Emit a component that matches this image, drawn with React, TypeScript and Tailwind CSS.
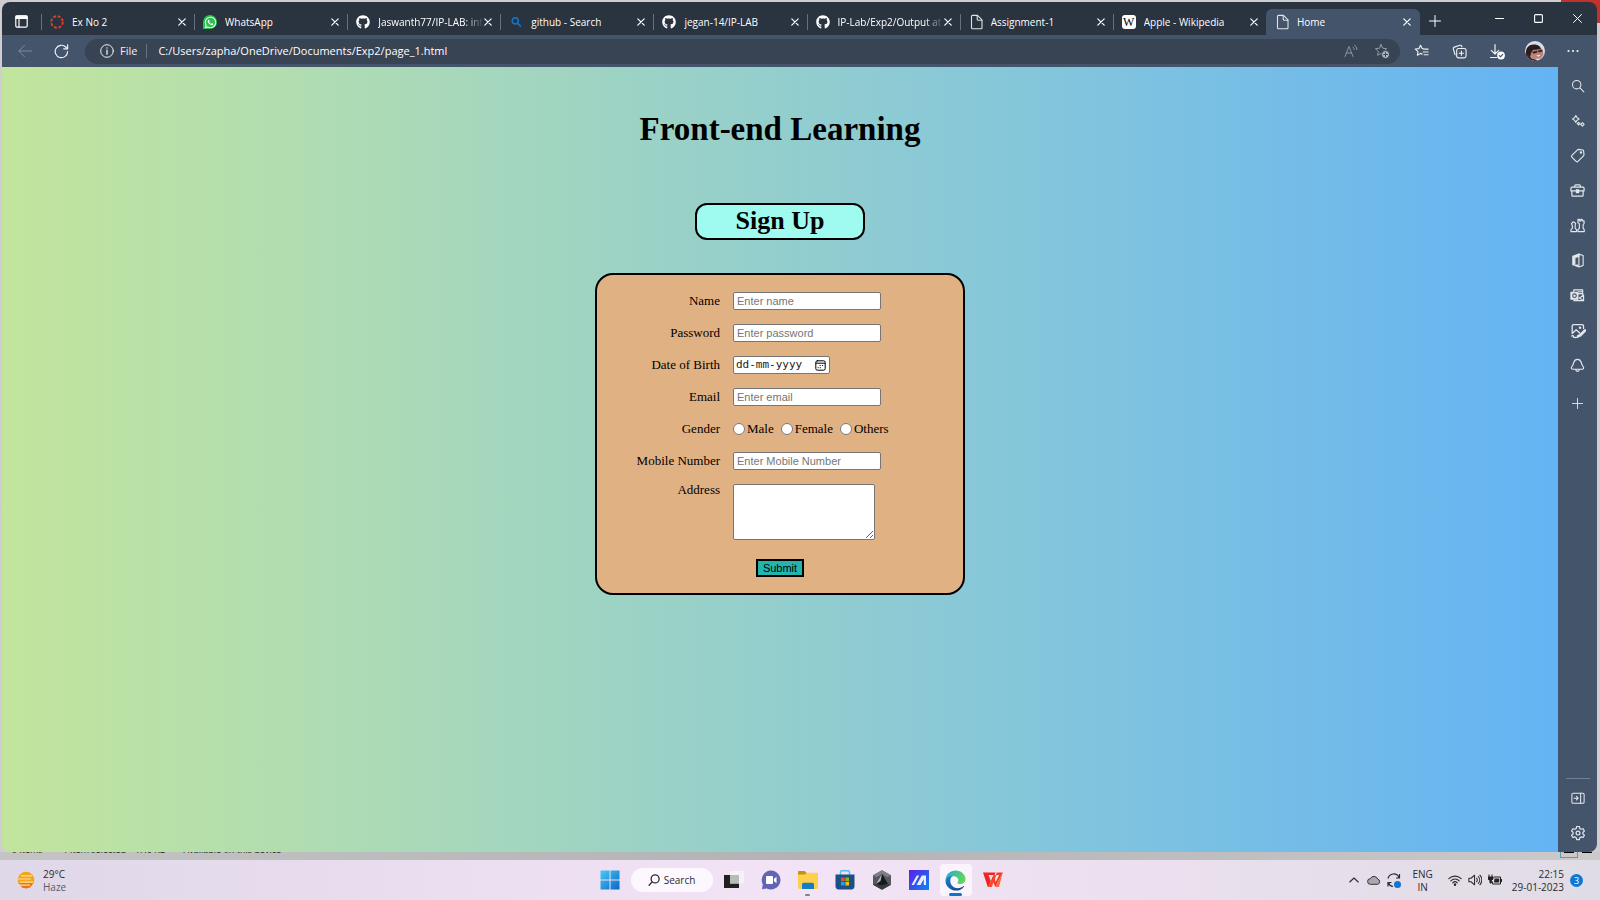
import type { ReactNode } from "react";
import { FaGithub, FaWhatsapp } from "react-icons/fa";

function Svg({ size = 16, box = 16, sw = 1.2, className = "", children }: { size?: number; box?: number; sw?: number; className?: string; children: ReactNode }) {
  return (
    <svg width={size} height={size} viewBox={`0 0 ${box} ${box}`} fill="none" stroke="currentColor" strokeWidth={sw} strokeLinecap="round" strokeLinejoin="round" className={className} aria-hidden="true">
      {children}
    </svg>
  );
}

const STAR = "M7 1.6l1.7 3.6 3.9.5-2.9 2.7.7 3.9L7 10.4l-3.4 1.9.7-3.9L1.4 5.7l3.9-.5z";

const PageIcon = () => (
  <Svg size={16} sw={1.1} className="text-[#dfe3e8]">
    <path d="M2.500 2.400c0-.6.4-1 1-1h5l4.500 4.500v7.900c0 .6-.4 1-1 1H3.500c-.6 0-1-.4-1-1z" />
    <path d="M8.200 1.600v3.600c0 .6.4 1 1 1h3.600" />
  </Svg>
);

const CanvasIcon = () => (
  <Svg size={14} sw={2.2} className="text-[#d8432f]">
    <circle cx="8" cy="8" r="6.600" strokeDasharray="3.300 1.880" strokeLinecap="butt" />
  </Svg>
);

const WhatsAppIcon = () => (
  <span className="flex size-[14px] items-center justify-center rounded-full rounded-bl-sm bg-[#2bc14e] text-white">
    <FaWhatsapp size={13} />
  </span>
);

const SearchFav = () => (
  <Svg size={12} sw={2.2} className="mx-px text-[#1a6fc0]">
    <circle cx="7" cy="6.500" r="4" />
    <path d="M10 9.500l4 4" />
  </Svg>
);

const WikiIcon = () => (
  <span className="flex size-[14px] items-center justify-center rounded-[3px] bg-white font-['Liberation_Serif',serif] text-[12px] leading-none text-black">W</span>
);

const Cross = () => (
  <Svg size={8} box={10} sw={1.5}>
    <path d="M1 1l8 8M9 1l-8 8" />
  </Svg>
);

const tabs: { title: string; icon: ReactNode; fade?: boolean; active?: boolean }[] = [
  { title: "Ex No 2", icon: <CanvasIcon /> },
  { title: "WhatsApp", icon: <WhatsAppIcon /> },
  { title: "Jaswanth77/IP-LAB: int", icon: <FaGithub size={14} className="text-white" />, fade: true },
  { title: "github - Search", icon: <SearchFav /> },
  { title: "jegan-14/IP-LAB", icon: <FaGithub size={14} className="text-white" /> },
  { title: "IP-Lab/Exp2/Output at", icon: <FaGithub size={14} className="text-white" />, fade: true },
  { title: "Assignment-1", icon: <PageIcon /> },
  { title: "Apple - Wikipedia", icon: <WikiIcon /> },
  { title: "Home", icon: <PageIcon />, active: true },
];

function TabBar() {
  return (
    <header className="flex h-[33px] items-end bg-[#2a3340] text-white">
      <button aria-label="Tab actions" className="mr-[13px] mb-[7px] ml-[13px]">
        <Svg size={13} box={13} sw={1.2}>
          <rect x="0.800" y="0.800" width="11.400" height="11.400" rx="1.500" />
          <path d="M1 1.200h11v2.200H1z" fill="currentColor" />
          <path d="M4 4v8" />
        </Svg>
      </button>
      <nav className="flex h-[26px] min-w-0 max-w-[1379px] flex-1">
        {tabs.map((t, i) => (
          <div
            key={i}
            className={
              t.active
                ? "flex min-w-0 flex-1 items-center rounded-t-md bg-[#44546a] px-[9px]"
                : "flex min-w-0 flex-1 items-center pr-2 pl-[9px] before:-ml-[9px] before:mr-2 before:h-4 before:w-px before:bg-[#66707d]"
            }
          >
            <span className="flex w-4 shrink-0 items-center">{t.icon}</span>
            <a
              href="#"
              className={
                t.fade
                  ? "ml-[6px] min-w-0 flex-1 overflow-hidden text-[10px] whitespace-nowrap [mask-image:linear-gradient(to_right,black_82%,transparent)]"
                  : "ml-[6px] min-w-0 flex-1 overflow-hidden text-[10px] whitespace-nowrap"
              }
            >
              {t.title}
            </a>
            <button aria-label="Close tab" className="shrink-0">
              <Cross />
            </button>
          </div>
        ))}
      </nav>
      <button aria-label="New tab" className="mb-2 ml-[9px]">
        <Svg size={12} box={12} sw={1}><path d="M6 .5v11M.5 6h11" /></Svg>
      </button>
      <div className="mb-3 ml-auto flex items-center gap-[30px] pr-[15px]">
        <button aria-label="Minimize"><Svg size={9} box={9} sw={1}><path d="M.5 4.500h8" /></Svg></button>
        <button aria-label="Maximize"><Svg size={9} box={9} sw={1.1}><rect x=".6" y=".6" width="7.800" height="7.800" rx="1" /></Svg></button>
        <button aria-label="Close window"><Svg size={9} box={10} sw={1.1}><path d="M.6.6l8.800 8.800M9.400.6L.6 9.400" /></Svg></button>
      </div>
    </header>
  );
}

const toolClass = "flex w-[38px] items-center justify-center";

function Toolbar() {
  return (
    <div className="flex h-8 items-center bg-[#44546a] text-[#eef1f4]">
      <button aria-label="Back" className="ml-4 text-[#7f8b9a]">
        <Svg size={14} box={14} sw={1}><path d="M13.500 7H.8M6.500 1.200L.8 7l5.700 5.800" /></Svg>
      </button>
      <button aria-label="Refresh" className="ml-[22px]">
        <Svg size={15} box={15} sw={1.2}>
          <path d="M13.600 7.500A6.200 6.200 0 1 1 11.700 3l1.700 1.700" />
          <path d="M13.600.8v4H9.700" />
        </Svg>
      </button>
      <div className="ml-4 flex h-[25px] min-w-0 flex-1 items-center rounded-full bg-[#384354] pr-[10px] pl-[15px]">
        <Svg size={14} box={14} sw={1}>
          <circle cx="7" cy="7" r="6.300" />
          <path d="M7 6.200v4M7 3.800v.3" strokeWidth="1.300" />
        </Svg>
        <label htmlFor="url" className="ml-[6px] text-[11px]">File</label>
        <span className="ml-[9px] h-[14px] w-px bg-[#667283]" />
        <input id="url" readOnly value="C:/Users/zapha/OneDrive/Documents/Exp2/page_1.html" className="ml-[11px] min-w-0 flex-1 bg-transparent text-[11px] text-white outline-none" />
        <button aria-label="Read aloud" className="text-[#8a94a1]">
          <Svg size={14} box={14} sw={1}>
            <path d="M1 12.500L5 2.500l4 10M2.400 9h5.200M9 3.200a3 3 0 0 1 1.300 2.300M10.500 1.200A5 5 0 0 1 13 5.500" />
          </Svg>
        </button>
        <button aria-label="Add to favorites" className="ml-4 text-[#939ca8]">
          <Svg size={16} sw={1}>
            <path d={STAR} />
            <circle cx="11.500" cy="11.500" r="4" fill="#b3b9c1" stroke="#384354" />
            <path d="M11.500 9.600v3.800M9.600 11.500h3.800" stroke="#384354" />
          </Svg>
        </button>
      </div>
      <div className="ml-[2px] flex items-center pr-[5px]">
        <button aria-label="Favorites" className={toolClass}>
          <Svg size={15} box={16} sw={1.2}>
            <path d="M8.700 10.800L7 10l-3.400 2 .7-3.900L1.400 5.400l3.900-.5L7 1.400l1.700 3.500 1.500.2M10.500 5.500H15M9.800 8.500H15M10.800 11.500H15" />
          </Svg>
        </button>
        <button aria-label="Collections" className={toolClass}>
          <Svg size={15} box={16} sw={1.2}>
            <rect x="5" y="4.800" width="10" height="10" rx="2" />
            <path d="M10 7.500v4.600M7.700 9.800h4.600M3.300 11.500L1.400 5.300c-.3-1 .1-1.700 1-2l6-1.900c1-.3 1.700.1 2 1l.2.7" />
          </Svg>
        </button>
        <button aria-label="Downloads" className={toolClass}>
          <Svg size={17} box={17} sw={1.2}>
            <path d="M6 1.500v9.300M2.300 7.300L6 11l3.700-3.700M1.500 14.500h6" />
            <circle cx="12" cy="12.500" r="3.900" fill="#fff" stroke="none" />
            <path d="M10.300 12.600l1.200 1.200 2.200-2.400" stroke="#44546a" />
          </Svg>
        </button>
        <button aria-label="Profile" className={toolClass}>
          <svg width="20" height="20" viewBox="0 0 20 20" aria-hidden="true">
            <clipPath id="face"><circle cx="10" cy="10" r="10" /></clipPath>
            <g clipPath="url(#face)">
              <path d="M0 0h20v20H0z" fill="#d9dcea" />
              <path d="M5 9l11-2 2 3 .5 4-3 3.500-7 .5-4-4z" fill="#b98377" />
              <path d="M1 11c0-4 3-7.500 7.500-7.500 4.500-.3 7 2 7.500 4.500L8 9l-2 3-1 5-4-3z" fill="#2b1d1e" />
              <path d="M7 11l5-1.500.5 2-4 1.200zM12.800 9.500l4.500-1 .2 2-3.700 1z" fill="#3a2425" />
              <path d="M0 12l4 2 3 3.500 5 1.500 2 2H0z" fill="#4a2427" />
              <path d="M11 14.500l5-.7-2.500 2z" fill="#f3e3de" />
            </g>
          </svg>
        </button>
        <button aria-label="Settings and more" className={toolClass}>
          <Svg size={12} box={12} sw={0}>
            <g fill="currentColor"><circle cx="1.500" cy="6" r="1.100" /><circle cx="6" cy="6" r="1.100" /><circle cx="10.500" cy="6" r="1.100" /></g>
          </Svg>
        </button>
      </div>
    </div>
  );
}

const sideIcons: [string, ReactNode][] = [
  ["Search", <Svg size={14} sw={1.2}><circle cx="6.500" cy="6.500" r="4.800" /><path d="M10.200 10.200l4.500 4.500" /></Svg>],
  ["Discover", <Svg size={14} sw={1.3}><path d="M5.500 1.700C6 3.800 7.400 5.100 9.300 5.700 7.400 6.300 6 7.500 5.500 9.600 5 7.500 3.600 6.300 1.700 5.700 3.600 5.100 5 3.800 5.500 1.700zM8.600 9.500l1.500 1.500-1.500 1.500L7.100 11zM13 9.800l2 2-2 2-2-2z" /></Svg>],
  ["Shopping", <Svg size={15} sw={1.2}><path d="M9 1.500l4.800.6c.4 0 .7.400.7.800l.4 4.300c0 .4-.1.800-.4 1.100l-6 6c-.6.600-1.400.6-2 0L2 9.800c-.6-.6-.6-1.400 0-2l6-5.900c.3-.3.600-.4 1-.4z" /><circle cx="11.700" cy="4.700" r=".7" fill="currentColor" /></Svg>],
  ["Tools", <Svg size={15} sw={1.3}><path d="M5 4.500V3c0-.6.400-1 1-1h4c.6 0 1 .4 1 1v1.500M1 5.500c0-.6.400-1 1-1h12c.6 0 1 .4 1 1v3H1zM2 8.500V13c0 .6.400 1 1 1h10c.6 0 1-.4 1-1V8.500" /><rect x="6.800" y="7.200" width="2.400" height="3" fill="currentColor" /></Svg>],
  ["Games", <Svg size={15} sw={1.2}><path d="M1 14.500v-2L2.500 11V8L1.500 6 3.500 4 6 5.500 5.500 8v3L7 12.500v2zM8.500 14.500v-2L10 11V6L8.500 5V1.500H10V3h1.500V1.500H13V3h2v3l-1 1v4l1.200 1.500v2z" /></Svg>],
  ["Office", <Svg size={15} sw={1.2}><path d="M9.500 1.200L14 2.600v10.800l-4.500 1.400-6-2.200 6 .4z" /><path d="M9.500 1L3 3.600v8.800l2.200-1V4.700l4.300-1z" fill="currentColor" /></Svg>],
  ["Outlook", <Svg size={15} sw={1.2}><path d="M4 4V2h9.500v5M4 13.500h10.500V7.500L10 11M9 6h4M9 4h4.500M10 10.500l4.500 3" /><rect x="1" y="4.500" width="7.500" height="7.500" fill="currentColor" /><circle cx="4.800" cy="8.200" r="1.900" stroke="#44546a" /></Svg>],
  ["Image editor", <Svg size={16} sw={1.3}><path d="M13.500 5.500V3c0-.8-.5-1.300-1.300-1.300H3.500c-.8 0-1.300.5-1.300 1.300v7.500l4-3.800 3.500 3.300M1.500 13c1.800-1 2.500 0 1.800 1.200 1.500.5 3.500.3 5-.4" /><circle cx="10" cy="4.700" r=".6" /><path d="M15 7.500l-5 5-1.800.6" strokeWidth="2.600" /></Svg>],
  ["Notifications", <Svg size={15} sw={1.2}><path d="M8 1.500c2 0 3.400 1.400 4 3.300.5 1.900 1.200 3.400 2.200 4.600.8 1.200.3 2.600-1.200 2.600H3c-1.500 0-2-1.400-1.200-2.600C2.800 8.200 3.500 6.700 4 4.800c.6-1.900 2-3.300 4-3.300zM6 12.200c.2 1.300 1 2 2 2s1.800-.7 2-2" /></Svg>],
];

function Sidebar() {
  return (
    <aside className="flex w-[39px] shrink-0 flex-col items-center bg-[#44546a] pt-px pb-[2px] text-[#e3e7eb]">
      {sideIcons.map(([name, icon]) => (
        <button key={name} aria-label={name} className="flex h-[35px] items-center justify-center">{icon}</button>
      ))}
      <button aria-label="Customize" className="mt-[3px] flex h-[35px] items-center">
        <Svg size={11} box={12} sw={1}><path d="M6 .5v11M.5 6h11" /></Svg>
      </button>
      <span className="mt-auto mb-px h-px w-6 bg-[#74808f]" />
      <button aria-label="Hide sidebar" className="flex h-[35px] items-center">
        <Svg size={14} sw={1.2}><rect x="1" y="2.500" width="14" height="11.500" rx="1.500" /><path d="M11 2.500V14M3.500 8.200h4.600M6.200 6.200l2 2-2 2" /></Svg>
      </button>
      <button aria-label="Settings" className="flex h-[35px] items-center">
        <Svg size={16} sw={1.2}>
          <path d="M6.700 1.500h2.600l.5 2 1.300.8 2-.6 1.300 2.300-1.500 1.400v1.500l1.500 1.300-1.300 2.300-2-.6-1.300.8-.5 2H6.700l-.5-2-1.300-.8-2 .6-1.300-2.300 1.500-1.300V7.400L1.600 6l1.300-2.300 2 .6 1.300-.8z" />
          <circle cx="8" cy="8.100" r="1.900" />
        </Svg>
      </button>
    </aside>
  );
}

const fieldClass = "h-[18px] w-[148px] rounded-[2px] border border-[#767676] bg-white px-[3px] font-['Liberation_Sans',Arial,sans-serif] text-[11px] leading-4 text-black placeholder:text-[#757575] outline-none";
const labelClass = "justify-self-end whitespace-nowrap";

function SignUpPage() {
  return (
    <main className="flex min-w-0 flex-1 flex-col items-center bg-linear-to-r from-[#c2e59c] to-[#64b3f4] pt-[42px] font-['Liberation_Serif','Times_New_Roman',serif] text-black">
      <h1 className="text-[33px] leading-10 font-bold">Front-end Learning</h1>
      <h2 className="mt-[54px] w-[170px] rounded-xl border-2 border-black bg-[#9ffbef] pt-px pb-[3px] text-center text-[26px] leading-[29px] font-bold">Sign Up</h2>
      <form onSubmit={(e) => e.preventDefault()} className="mt-[33px] w-[370px] rounded-[18px] border-2 border-black bg-[#e0b183] pt-[17px] pb-4 text-[13px] leading-[18px]">
        <div className="grid grid-cols-[123px_1fr] gap-x-[13px] gap-y-[14px]">
          <label htmlFor="name" className={labelClass}>Name</label>
          <input id="name" placeholder="Enter name" className={fieldClass} />
          <label htmlFor="password" className={labelClass}>Password</label>
          <input id="password" type="password" placeholder="Enter password" className={fieldClass} />
          <label htmlFor="dob" className={labelClass}>Date of Birth</label>
          <div className="flex h-[18px] w-[97px] items-center rounded-[2px] border border-[#767676] bg-white pr-[3px] pl-[2px]">
            <input id="dob" placeholder="dd-mm-yyyy" className="w-0 min-w-0 flex-1 bg-transparent font-['DejaVu_Sans_Mono',monospace] text-[11px] leading-4 text-black outline-none placeholder:text-[#222]" />
            <button type="button" aria-label="Open calendar" className="shrink-0">
              <Svg size={11} box={11} sw={1}>
                <rect x=".8" y=".8" width="9.400" height="9.400" rx="1.500" />
                <path d="M1 3.200h9" />
                <path d="M5 5.500h.2M7.500 5.500h.2M3 7.700h.2M5.200 7.700h.2" />
              </Svg>
            </button>
          </div>
          <label htmlFor="email" className={labelClass}>Email</label>
          <input id="email" type="email" placeholder="Enter email" className={fieldClass} />
          <span id="gender" className={labelClass}>Gender</span>
          <div role="radiogroup" aria-labelledby="gender" className="flex gap-[7px]">
            {["Male", "Female", "Others"].map((g) => (
              <label key={g} className="flex items-center gap-[2px]">
                <input type="radio" name="gender" className="m-0 size-3" />
                {g}
              </label>
            ))}
          </div>
          <label htmlFor="mobile" className={labelClass}>Mobile Number</label>
          <input id="mobile" type="tel" placeholder="Enter Mobile Number" className={fieldClass} />
          <label htmlFor="address" className="justify-self-end leading-3">Address</label>
          <textarea id="address" className="h-14 w-[142px] rounded-[2px] border border-[#767676] bg-white p-[2px] text-[11px] outline-none" />
        </div>
        <button type="submit" className="mx-auto mt-[19px] block h-[18px] border-2 border-black bg-[#22b5ae] px-[5px] font-['Liberation_Sans',Arial,sans-serif] text-[11px] leading-[14px] text-black">Submit</button>
      </form>
    </main>
  );
}

const apps: [string, ReactNode][] = [
  ["Task view", <svg width="20" height="20" viewBox="0 0 20 20"><rect x="0" y="5" width="15" height="13" fill="#202020" /><rect x="6" y="1" width="14" height="12.500" fill="#f6f4f6" opacity=".9" /><rect x="6" y="5" width="9" height="8.500" fill="#b7bbb9" /></svg>],
  ["Chat", <svg width="20" height="20" viewBox="0 0 20 20"><path d="M10 .5a9.500 9.500 0 1 1-4.300 18L1 19.300l.8-4.800A9.500 9.500 0 0 1 10 .5z" fill="#6264b5" /><rect x="5" y="6" width="7" height="8" rx="1" fill="#fff" /><path d="M12.800 9l2.700-2.200v6.400L12.800 11z" fill="#fff" /></svg>],
  ["File Explorer", <svg width="22" height="20" viewBox="0 0 22 20"><path d="M1 2.200C1 1.500 1.500 1 2.200 1h5.500l2 2H20c.6 0 1 .4 1 1v14H1z" fill="#c98f10" /><path d="M1 4.500h7l1.500-1.700H20c.6 0 1 .4 1 1V17c0 1.200-.5 2-2 2H3c-1.500 0-2-.8-2-2z" fill="#fcd04b" /><path d="M5 19v-4.500c0-1 .7-1.700 1.700-1.700h8.600c1 0 1.700.7 1.700 1.700V19z" fill="#167cc6" /></svg>],
  ["Microsoft Store", <svg width="20" height="20" viewBox="0 0 20 20"><path d="M5.500 5V2c0-.8.4-1.200 1.200-1.200h6.600c.8 0 1.200.4 1.200 1.200v3" fill="none" stroke="#4ec1ee" strokeWidth="1.500" /><path d="M.5 4.500h19V16c0 2-1 3.500-3 3.500h-13c-2 0-3-1.500-3-3.500z" fill="#1d4e86" /><path d="M6 7.500h3.600v3.600H6z" fill="#f05022" /><path d="M10.400 7.500H14v3.600h-3.600z" fill="#80bb10" /><path d="M6 11.900h3.600v3.600H6z" fill="#17a5ea" /><path d="M10.400 11.900H14v3.600h-3.600z" fill="#fdb90e" /></svg>],
  ["Armoury Crate", <svg width="20" height="20" viewBox="0 0 20 20"><path d="M10 .3l9 5v9.400l-9 5-9-5V5.300z" fill="#54595d" /><path d="M10 .3l9 5-3.500 2L10 3.800 4.500 7.300 1 5.300z" fill="#7c8185" /><path d="M10 4l6 10-6 1.800L4 14z" fill="#181b1d" /><path d="M1 14.700l3-.7 6 1.800 6-1.800 3 .7-9 5z" fill="#383c3f" /><path d="M10 4L4 14l4.500-3z" fill="#b9bdbe" /></svg>],
  ["MyASUS", <svg width="20" height="20" viewBox="0 0 20 20"><defs><linearGradient id="asus" x1="0" y1="0" x2="1" y2="1"><stop offset="0" stopColor="#5b1ee8" /><stop offset="1" stopColor="#0d86f2" /></linearGradient></defs><path d="M0 0h20v20H0z" fill="url(#asus)" /><path d="M2.500 15L7.800 5.500h2.400L4.900 15zM7.500 15l5.300-9.500H17V15h-2.200V9l-3.300 6z" fill="#e8f0ff" /></svg>],
  ["Microsoft Edge", <svg width="21" height="21" viewBox="0 0 21 21"><defs><linearGradient id="edge-a" x1="0" y1="0" x2="1" y2=".4"><stop offset="0" stopColor="#23a9d8" /><stop offset="1" stopColor="#5fd65a" /></linearGradient><linearGradient id="edge-b" x1="0" y1="0" x2=".6" y2="1"><stop offset="0" stopColor="#1b88d6" /><stop offset="1" stopColor="#114c96" /></linearGradient></defs><path d="M.5 10C1 4 5.500.5 10.500.5c6 0 10 4.200 10 8.500 0 3.200-2.500 5-5.200 5-1.800 0-2.800-.6-2.800-1.300 0-.6.9-.9.9-2.700 0-2-2-3.800-4.700-3.800C5 6.200 1.500 7.500.5 10z" fill="url(#edge-a)" /><path d="M.5 10.500C.8 8 4 5.700 8 5.700c-2 1-3 3.300-2.700 5.800.4 4 3.700 6.700 7.500 6.700 2.200 0 4.300-.8 5.700-2.200.4-.3.8 0 .6.400-1.600 2.700-4.600 4.200-8.100 4.200C5 20.600.3 16 .5 10.500z" fill="url(#edge-b)" /></svg>],
  ["WPS Office", <svg width="20" height="20" viewBox="0 0 20 20"><path d="M0 2.500h12.500l-1 2.500H5.500l2.300 6L5.500 17H4.800z" fill="#f0241c" /><path d="M4.800 17L10.500 5h3L8.800 17z" fill="#ff4a30" /><path d="M8.800 8l3.400 9L19.800 2.500h-6l-1 2.500h3.400l-3.400 7-2-5z" fill="#f23a25" /><path d="M12.200 17L19.800 2.500 16 17z" fill="#ff6a3c" /></svg>],
];

function Taskbar() {
  return (
    <footer className="grid h-10 grid-cols-[1fr_auto_1fr] items-center bg-linear-to-r from-[#dfd8e8] via-[#f3e3f6] to-[#e0dce5] text-[10px] leading-[13px] text-[#2b2a2e]">
      <div className="flex items-center gap-2 pl-[17px]">
        <svg width="18" height="18" viewBox="0 0 18 18" aria-hidden="true">
          <circle cx="9" cy="9" r="8.300" fill="#f5a51b" />
          <path d="M2 12h14l-3 4.500-4 1-4-1z" fill="#e9731d" />
          <path d="M4 4.800h11M0 8h14M3 11.200h13M1 14.200h12" stroke="#fbe09a" strokeWidth="1.200" />
        </svg>
        <div className="pt-px"><div>29°C</div><div className="text-[#5c5963]">Haze</div></div>
      </div>
      <div className="flex items-center gap-[5px] pl-[2px]">
        <button aria-label="Start" className="flex size-8 items-center justify-center">
          <svg width="20" height="20" viewBox="0 0 20 20"><defs><linearGradient id="win" x1="0" y1="0" x2="1" y2="1"><stop offset="0" stopColor="#4cc8f5" /><stop offset="1" stopColor="#0669c5" /></linearGradient></defs><path d="M.5.5h9v9h-9zM10.500.5h9v9h-9zM.5 10.500h9v9h-9zM10.500 10.500h9v9h-9z" fill="url(#win)" /></svg>
        </button>
        <button className="flex h-6 w-[82px] items-center justify-center gap-1 rounded-full bg-[#fdf8fe]">
          <Svg size={12} sw={1.7}><circle cx="9.500" cy="6.500" r="5.300" /><path d="M5.500 10.500L1.500 15" /></Svg>
          Search
        </button>
        {apps.map(([name, icon]) => (
          <button
            key={name}
            aria-label={name}
            className={
              name === "Microsoft Edge"
                ? "relative flex size-8 items-center justify-center rounded bg-[#fbf4fc] after:absolute after:bottom-0 after:h-[3px] after:w-[13px] after:rounded-full after:bg-[#1172c8]"
                : name === "File Explorer"
                  ? "relative flex size-8 items-center justify-center after:absolute after:bottom-0 after:h-[2px] after:w-[5px] after:rounded-full after:bg-[#85808a]"
                  : "flex size-8 items-center justify-center"
            }
          >
            {icon}
          </button>
        ))}
      </div>
      <div className="flex items-center justify-end pr-[17px]">
        <button aria-label="Show hidden icons"><Svg size={10} box={10} sw={1.1}><path d="M.8 7L5 3l4.200 4" /></Svg></button>
        <svg width="14" height="14" viewBox="0 0 14 14" className="ml-2" aria-hidden="true"><path d="M3.500 11.300a2.800 2.800 0 0 1-.2-5.600 4 4 0 0 1 7.400.4 2.700 2.700 0 0 1 0 5.200z" fill="#aaa7ad" stroke="#333" strokeWidth="1" /></svg>
        <svg width="14" height="15" viewBox="0 0 14 15" className="ml-[6px]" fill="none" stroke="#2b2a2e" strokeWidth="1.200" aria-hidden="true"><path d="M1 5.500A5.800 5.800 0 0 1 12 4.500M12.500 1v4H9M1 13.500v-4h3.500M1.500 9.800C2.300 12 4 13.300 6 13.500" /><circle cx="10.500" cy="11.500" r="3.500" fill="#1275d0" stroke="none" /></svg>
        <div className="ml-[11px] pt-px text-center"><div>ENG</div><div>IN</div></div>
        <Svg size={14} sw={1.3} className="ml-[15px]"><path d="M1 6.500a10 10 0 0 1 14 0M3.200 8.900a6.800 6.800 0 0 1 9.600 0M5.400 11.200a3.700 3.700 0 0 1 5.200 0" /><circle cx="8" cy="13.300" r=".8" fill="currentColor" /></Svg>
        <Svg size={14} sw={1.2} className="ml-[6px]"><path d="M1 6v4h2.500L7.500 13.500v-11L3.500 6zM9.800 6a3.200 3.200 0 0 1 0 4M11.800 4.200a5.500 5.500 0 0 1 0 7.600M13.600 2.500a8 8 0 0 1 0 11" /></Svg>
        <svg width="14" height="12" viewBox="0 0 14 12" className="ml-[6px]" aria-hidden="true"><path d="M1 .5v2.500M4 .5v2.500M0 3h5v2L3.300 6.500v2.500H2V6.500L0 5z" fill="#222" stroke="#222" /><path d="M5.500 3h7v7h-8V7.500" fill="none" stroke="#222" /><path d="M6.500 4.500h4.700v4H6zM13 5h1v3h-1z" fill="#222" /></svg>
        <div className="ml-[10px] pt-px text-right"><div>22:15</div><div>29-01-2023</div></div>
        <span className="ml-[6px] flex size-[13px] items-center justify-center rounded-full bg-[#0f78d4] text-[9px] leading-none text-white">3</span>
      </div>
    </footer>
  );
}

export default function App() {
  return (
    <div className="flex min-h-screen flex-col bg-[#cfcdd0] font-['Open_Sans','Noto_Sans',sans-serif]">
      <div className="flex flex-1 flex-col bg-[linear-gradient(#c0322b,#c0322b)] bg-[length:39px_23px] bg-right-top bg-no-repeat pt-[2px] pr-[3px] pl-[2px]">
        <div className="flex flex-1 flex-col overflow-hidden rounded-lg">
          <TabBar />
          <Toolbar />
          <div className="flex flex-1">
            <SignUpPage />
            <Sidebar />
          </div>
        </div>
      </div>
      <div className="flex h-2 items-end overflow-hidden bg-linear-to-r from-[#c4c4c5] via-[#b3b2b4] to-[#cbc9ca] pr-2 pb-[2px] pl-3 text-[9px] leading-4 whitespace-nowrap text-[#222]">
        <span>9 items</span>
        <span className="ml-5">1 item selected</span>
        <span className="ml-2">47.0 KB</span>
        <span className="ml-[18px]">Available on this device</span>
        <span className="ml-auto flex h-[6px] w-[18px] justify-center border border-t-0 border-[#4aa3c4]">
          <span className="h-px w-[10px] bg-black" />
        </span>
        <span className="mb-[5px] ml-1 h-px w-[10px] bg-black" />
      </div>
      <Taskbar />
    </div>
  );
}
